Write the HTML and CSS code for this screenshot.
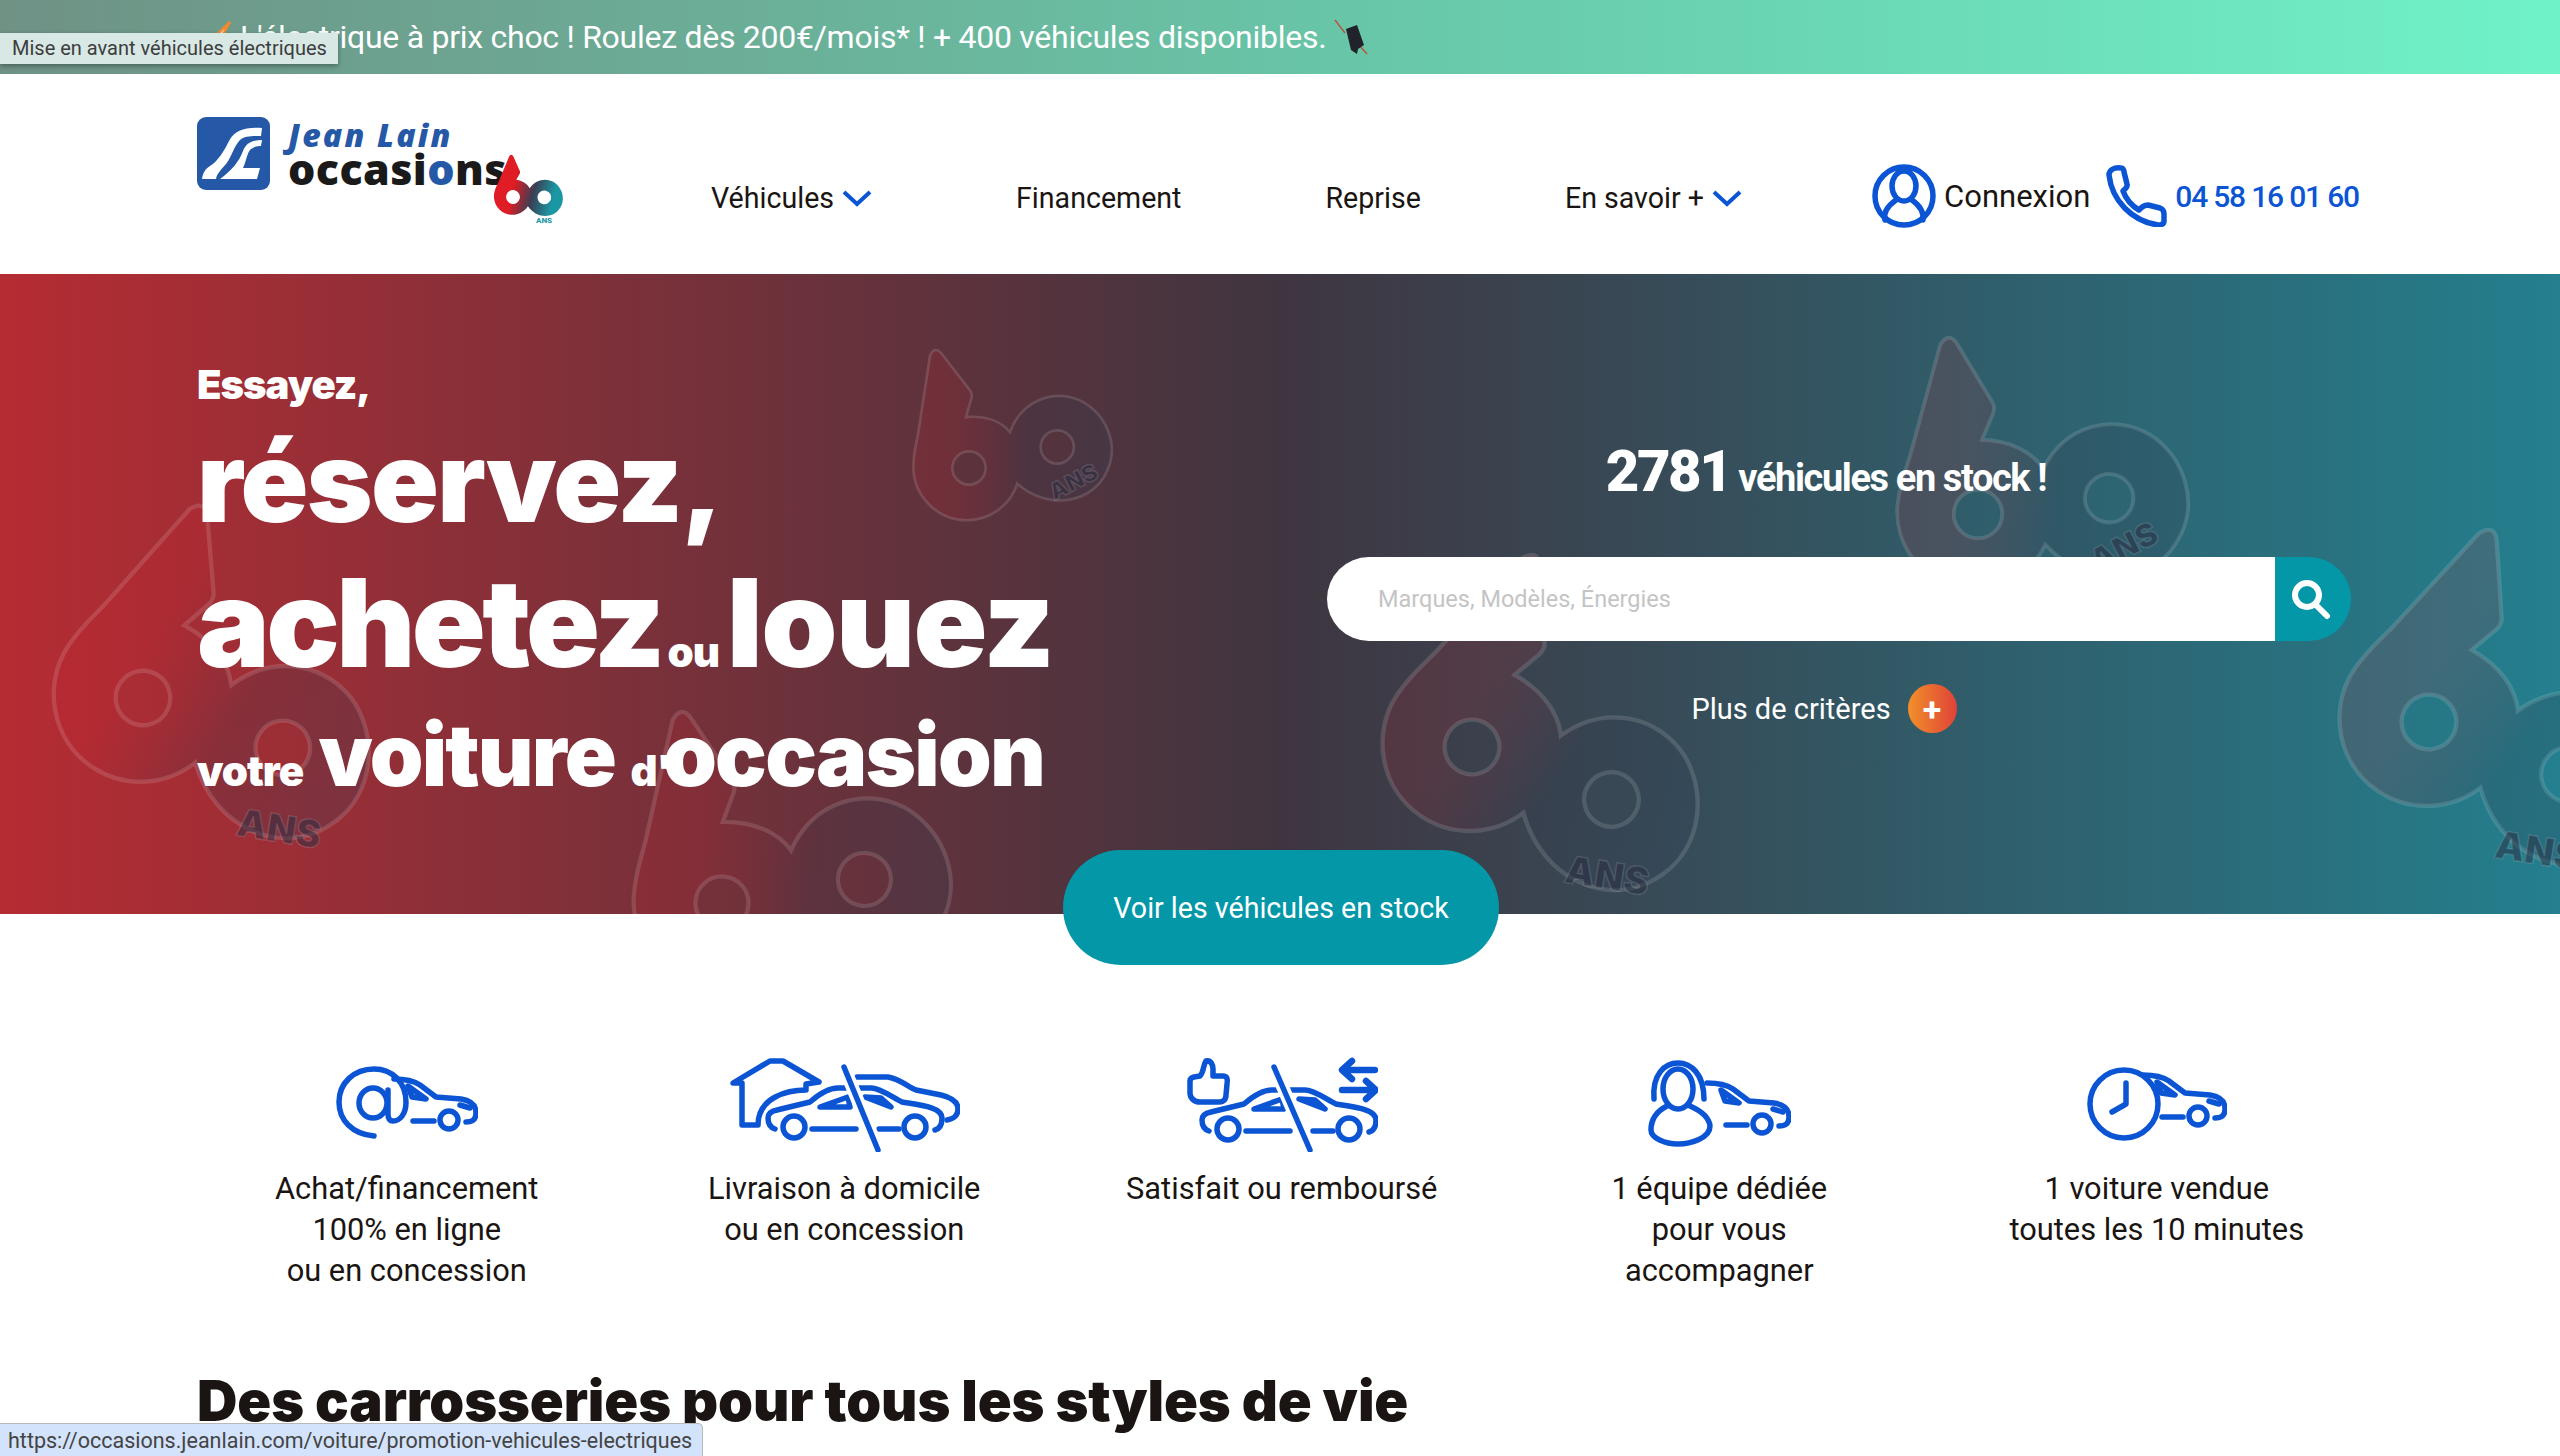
FILE: index.html
```html
<!DOCTYPE html>
<html lang="fr">
<head>
    <meta charset="UTF-8">
    <title>Jean Lain Occasions</title>
    <link rel="stylesheet" href="styles.css">
</head>
<body>
    <!-- shared shapes -->
    <svg class="defs" width="0" height="0">
        <defs>
            <linearGradient id="wm-fill" gradientUnits="userSpaceOnUse" x1="40" y1="0" x2="640" y2="0">
                <stop offset="0.2" stop-color="#d0202c" stop-opacity="0.15"/>
                <stop offset="0.55" stop-color="#2f3448" stop-opacity="0.22"/>
                <stop offset="1" stop-color="#2f3f58" stop-opacity="0.24"/>
            </linearGradient>
            <linearGradient id="logo-fill" gradientUnits="userSpaceOnUse" x1="40" y1="0" x2="640" y2="0">
                <stop offset="0.25" stop-color="#e01c24"/>
                <stop offset="0.55" stop-color="#3a3f55"/>
                <stop offset="0.85" stop-color="#1b97a4"/>
            </linearGradient>
            <path id="sixty" fill-rule="evenodd" d="M90 50Q105 20 125 45L210 155Q218 165 214 180L198 235C260 230 305 250 330 280C365 185 460 150 540 185C620 225 660 320 620 400C580 490 450 520 352 435C330 500 270 545 200 545C110 545 40 470 40 385C40 340 50 310 55 280ZM157 388a50 50 0 1 0 100 0a50 50 0 1 0 -100 0ZM422 325a50 50 0 1 0 100 0a50 50 0 1 0 -100 0Z"/>
            <g id="car-rear">
                <path d="M56 9C68 9 76 11 82 15L98 27L123 29C135 31 138 37 138 43C138 50 134 52 128 52"/>
                <path d="M75 51H96M122 35L132 38"/>
                <circle cx="111" cy="50" r="9"/>
                <path class="solid" d="M70 16L88 29L74 27Z"/>
            </g>
            <g id="car-full">
                <path d="M23 74C17 72 16 67 16 63C16 58 20 56 25 55L58 47C66 40 76 33 86 33L119 33C128 33 140 42 150 47C168 50 190 52 190 63C190 70 187 74 183 75"/>
                <path d="M60 74H104M127 74H147"/>
                <circle cx="42" cy="72" r="11"/>
                <circle cx="163" cy="72" r="11"/>
                <path class="solid" d="M68 52L96 42L98 52ZM113 42L129 43L139 52Z"/>
            </g>
        </defs>
    </svg>

    <div class="promo">
        <svg class="promo-bolt" viewBox="0 0 30 30">
            <path d="M27 2L8 20L15 20L2 29L22 25L15 23Z"/>
        </svg>
        <span>L'électrique à prix choc ! Roulez dès 200€/mois* ! + 400 véhicules disponibles.</span>
        <svg class="promo-plug" viewBox="0 0 36 36">
            <path class="plug-wire" d="M2 1L12 14M26 26L34 35"/>
            <path class="plug-body" d="M13 10L24 6L31 26L25 30L24 35L18 31Z"/>
        </svg>
    </div>
    <div class="tooltip">Mise en avant véhicules électriques</div>

    <header class="site-header">
        <a class="logo">
            <svg class="logo-mark" viewBox="0 0 73 73">
                <rect width="73" height="73" rx="9"/>
                <path d="M65 11C48 10 38 13 32 24C27 34 21 44 13 49C8 52 6 56 5 62L19 62C20 56 25 52 29 47C35 39 37 29 43 23C47 19 56 19 64 19ZM65 23C55 23 49 26 46 34C42 45 34 54 23 62L60 62L63 51L46 51C50 43 50 33 56 31C59 29 62 29 64 29Z"/>
            </svg>
            <span class="logo-text">
                <span class="logo-jean">Jean Lain</span>
                <span class="logo-occ">occasi<b>o</b>ns</span>
            </span>
            <svg class="logo-sixty" viewBox="0 0 80 80">
                <g transform="translate(23 44) rotate(14) scale(.115) translate(-207 -388)">
                    <use href="#sixty" fill="url(#logo-fill)"/>
                    <circle cx="207" cy="388" r="60" fill="#fff"/>
                    <circle cx="472" cy="325" r="60" fill="#fff"/>
                </g>
                <text class="logo-ans" x="46" y="70">ANS</text>
            </svg>
        </a>
        <nav class="main-nav">
            <a class="nav-item">Véhicules <svg class="chev" viewBox="0 0 30 18"><path d="M2 3L15 15L28 3"/></svg></a>
            <a class="nav-item">Financement</a>
            <a class="nav-item">Reprise</a>
            <a class="nav-item">En savoir + <svg class="chev" viewBox="0 0 30 18"><path d="M2 3L15 15L28 3"/></svg></a>
        </nav>
        <div class="header-right">
            <a class="login">
                <svg class="line-icon login-icon" viewBox="0 0 64 64">
                    <circle cx="32" cy="32" r="29"/>
                    <ellipse cx="32" cy="22" rx="12" ry="15"/>
                    <path d="M13 56C11 48 17 41 24 36M40 36C47 41 52 48 51 56"/>
                </svg>
                Connexion
            </a>
            <a class="phone">
                <svg class="line-icon phone-icon" viewBox="0 0 62 62">
                    <path d="M3 10C3 5 8 2 15 3C17 3 18 5 18 7L21 19C22 22 19 24 17 26C20 34 26 41 33 45C36 42 38 40 42 40L54 43C57 44 58 46 58 49L58 56C58 59 55 60 52 60C26 56 6 36 3 10Z"/>
                </svg>
                04 58 16 01 60
            </a>
        </div>
    </header>

    <section class="hero">
        <svg class="hero-marks" viewBox="0 0 2560 640">
            <g class="wm">
                <use href="#sixty" transform="translate(143 424) rotate(33) scale(.545) translate(-207 -388)"/>
                <use href="#sixty" transform="translate(969 194) scale(.333) translate(-207 -388)"/>
                <use href="#sixty" transform="translate(722 629) rotate(4) scale(.53) translate(-207 -388)"/>
                <use href="#sixty" transform="translate(1978 240) rotate(6.5) scale(.485) translate(-207 -388)"/>
                <use href="#sixty" transform="translate(1472 473) rotate(34) scale(.547) translate(-207 -388)"/>
                <use href="#sixty" transform="translate(2429 448) rotate(34) scale(.547) translate(-207 -388)"/>
            </g>
            <g class="wm-ans">
                <text transform="translate(1077 215) rotate(-27)">ANS</text>
                <text class="mid" transform="translate(2129 283) rotate(-27)">ANS</text>
                <text class="big" transform="translate(277 568) rotate(9)">ANS</text>
                <text class="big" transform="translate(1605 615) rotate(9)">ANS</text>
                <text class="big" transform="translate(2535 590) rotate(9)">ANS</text>
            </g>
        </svg>
        <div class="hero-title">
            <div class="t-small">Essayez,</div>
            <div class="t-big">réservez,</div>
            <div class="t-big t-row2">achetez <small>ou</small> <span class="louez">louez</span></div>
            <div class="t-mid"><small>votre</small> voiture <small class="d">d'</small>occasion</div>
        </div>
        <div class="hero-search">
            <div class="stock"><strong>2781</strong> véhicules en stock !</div>
            <form class="search-bar">
                <input class="search-input" type="text" placeholder="Marques, Modèles, Énergies">
                <button class="search-btn" type="button">
                    <svg viewBox="0 0 44 44"><circle cx="19" cy="18" r="12"/><path d="M27 27L39 39"/></svg>
                </button>
            </form>
            <a class="more">Plus de critères <span class="more-plus">+</span></a>
        </div>
    </section>

    <div class="cta-wrap"><a class="cta">Voir les véhicules en stock</a></div>

    <section class="features">
        <div class="feature">
            <div class="feature-icon">
                <svg class="line-icon" width="142" height="76" viewBox="0 0 142 76">
                    <path d="M38 70C16 68 3 54 3 36C3 17 18 3 38 3C56 3 70 16 70 36C70 48 64 55 57 55C53 55 52 52 52 48L52 24"/>
                    <ellipse cx="37" cy="37" rx="14" ry="15"/>
                    <use href="#car-rear" transform="translate(2 4)"/>
                </svg>
            </div>
            <p>Achat/financement<br>100% en ligne<br>ou en concession</p>
        </div>
        <div class="feature">
            <div class="feature-icon">
                <svg class="line-icon" width="232" height="95" viewBox="0 0 232 95">
                    <path d="M14 26H5L42 4H55L91 25L78 27V33C60 33 30 40 30 68H14Z"/>
                    <path d="M129 20H160C172 22 180 30 188 33L213 38C225 41 230 46 230 52C230 58 226 62 219 63"/>
                    <use href="#car-full" transform="translate(24 -2)"/>
                    <path class="halo" d="M116 10L150 93"/>
                    <path d="M116 10L150 93"/>
                </svg>
            </div>
            <p>Livraison à domicile<br>ou en concession</p>
        </div>
        <div class="feature">
            <div class="feature-icon">
                <svg class="line-icon" width="192" height="95" viewBox="0 0 192 95">
                    <path d="M20 4C25 3 27 8 27 12L27 19L37 19C41 19 42 22 41 27L40 38C40 43 37 45 33 45L14 45C8 45 4 41 4 36L4 24Q4 21 8 20L14 19C18 15 17 8 20 4Z"/>
                    <path class="thick" d="M189 13H158M166 4L156 13L166 22M156 33H189M180 24L190 33L180 42"/>
                    <use href="#car-full"/>
                    <path class="halo" d="M88 10L124 93"/>
                    <path d="M88 10L124 93"/>
                </svg>
            </div>
            <p>Satisfait ou remboursé</p>
        </div>
        <div class="feature">
            <div class="feature-icon">
                <svg class="line-icon" width="144" height="88" viewBox="0 0 144 88">
                    <ellipse cx="31" cy="29" rx="15" ry="20"/>
                    <path d="M7 39C5 14 18 3 31 3C44 3 57 14 57 39"/>
                    <path d="M20 46C8 52 4 60 4 70C4 78 18 84 31 84C44 84 63 78 63 66C62 56 52 50 43 46"/>
                    <use href="#car-rear" transform="translate(4 14)"/>
                </svg>
            </div>
            <p>1 équipe dédiée<br>pour vous<br>accompagner</p>
        </div>
        <div class="feature">
            <div class="feature-icon">
                <svg class="line-icon" width="140" height="76" viewBox="0 0 140 76">
                    <use href="#car-rear"/>
                    <circle class="clock" cx="37" cy="38" r="34"/>
                    <path d="M39 17V38L25 46"/>
                </svg>
            </div>
            <p>1 voiture vendue<br>toutes les 10 minutes</p>
        </div>
    </section>

    <h2 class="styles-title">Des carrosseries pour tous les styles de vie</h2>

    <div class="status-bubble">https://occasions.jeanlain.com/voiture/promotion-vehicules-electriques</div>
</body>
</html>
```

FILE: styles.css
```css
html, body {
    margin: 0;
    height: 1456px;
    overflow: hidden;
}

body {
    position: relative;
    font-family: Roboto, sans-serif;
    color: #1a1512;
    background: #fff;
}

.defs {
    position: absolute;
}

/* Promo strip */
.promo {
    height: 74px;
    display: flex;
    align-items: center;
    padding-left: 203px;
    color: #fff;
    font-size: 32px;
    background: linear-gradient(90deg, #6f9285 0%, #68c8a9 55%, #70f2c8 100%);
}

.promo span {
    margin-left: 7px;
    letter-spacing: -0.27px;
}

.promo-bolt {
    width: 30px;
    height: 30px;
    margin-top: -4px;
}

.promo-bolt path {
    fill: #f7e6d8;
    stroke: #f08a2c;
    stroke-width: 2.5;
}

.promo-plug {
    width: 36px;
    height: 36px;
    margin-left: 7px;
}

.plug-wire {
    fill: none;
    stroke: #b5573f;
    stroke-width: 1.5;
}

.plug-body {
    fill: #20242a;
}

.tooltip {
    position: absolute;
    left: 0;
    top: 33px;
    width: 338px;
    height: 31px;
    box-sizing: border-box;
    padding-left: 12px;
    font-size: 20px;
    line-height: 31px;
    color: #3d3d3d;
    background: #d7e8e5;
    box-shadow: 0 2px 5px rgba(0, 0, 0, 0.35);
    white-space: nowrap;
}

/* Header */
.site-header {
    height: 200px;
    display: flex;
    position: relative;
    padding-left: 197px;
    box-sizing: border-box;
}

.logo {
    width: 514px;
    height: 200px;
    flex: none;
    display: flex;
    align-items: flex-start;
    position: relative;
}

.logo-mark {
    width: 73px;
    height: 73px;
    margin-top: 43px;
}

.logo-mark rect {
    fill: #2558a6;
}

.logo-mark path {
    fill: #fff;
}

.logo-text {
    display: flex;
    flex-direction: column;
    margin: 44px 0 0 18px;
}

.logo-jean {
    font-family: "Open Sans", sans-serif;
    font-style: italic;
    font-weight: 800;
    font-size: 32px;
    line-height: 33px;
    letter-spacing: 2.2px;
    color: #2558a6;
}

.logo-occ {
    font-family: "Open Sans", sans-serif;
    font-weight: 800;
    font-size: 43px;
    line-height: 36px;
    letter-spacing: 0.4px;
    color: #1a1a1a;
}

.logo-occ b {
    color: #2558a6;
}

.logo-sixty {
    position: absolute;
    left: 293px;
    top: 79px;
    width: 80px;
    height: 80px;
}

.logo-ans {
    font-family: Roboto, sans-serif;
    font-weight: 900;
    font-size: 8px;
    fill: #2a9aa8;
}

.main-nav {
    display: flex;
    gap: 144px;
    align-items: center;
    height: 100%;
    padding-top: 48px;
    box-sizing: border-box;
}

.nav-item {
    display: flex;
    align-items: center;
    gap: 8px;
    font-size: 28.6px;
    white-space: nowrap;
}

.chev {
    width: 30px;
    height: 18px;
    fill: none;
    stroke: #0b55d4;
    stroke-width: 4;
}

.header-right {
    display: flex;
    align-items: center;
    margin-left: 130px;
    padding-top: 44px;
    height: 100%;
    box-sizing: border-box;
}

.login {
    display: flex;
    align-items: center;
    gap: 8px;
    font-size: 31px;
}

.phone {
    display: flex;
    align-items: center;
    gap: 7px;
    margin-left: 16px;
    font-size: 30px;
    font-weight: 500;
    letter-spacing: -1.2px;
    color: #0b55d4;
    white-space: nowrap;
}

.line-icon {
    fill: none;
    stroke: #0b55d4;
    stroke-width: 5.5;
    stroke-linecap: round;
    stroke-linejoin: round;
}

.line-icon .solid {
    fill: #0b55d4;
    stroke: none;
}

.line-icon .halo {
    stroke: #fff;
    stroke-width: 13;
}

.line-icon .thick {
    stroke-width: 6.5;
}

.line-icon .clock {
    fill: #fff;
}

.login-icon {
    width: 64px;
    height: 64px;
}

.phone-icon {
    width: 62px;
    height: 62px;
}

/* Hero */
.hero {
    height: 640px;
    display: flex;
    position: relative;
    overflow: hidden;
    color: #fff;
    background: linear-gradient(90deg, #b62c33 0%, #3f3540 50%, #247f8e 100%);
}

.hero-marks {
    position: absolute;
    left: 0;
    top: 0;
    width: 2560px;
    height: 640px;
}

.wm {
    fill: url(#wm-fill);
    stroke: rgba(255, 255, 255, 0.13);
    stroke-width: 8;
}

.wm-ans text {
    font-family: Inter, sans-serif;
    font-weight: 900;
    font-size: 23px;
    text-anchor: middle;
    fill: rgba(40, 45, 65, 0.5);
    stroke: rgba(255, 255, 255, 0.14);
    stroke-width: 1.5;
}

.wm-ans .mid {
    font-size: 32px;
}

.wm-ans .big {
    font-size: 38px;
}

.hero-title {
    position: relative;
    width: 1130px;
    flex: none;
    padding: 85px 0 0 197px;
    font-family: Inter, sans-serif;
    font-weight: 900;
    white-space: nowrap;
}

.t-small {
    font-size: 40px;
    line-height: 52px;
    letter-spacing: -1px;
}

.t-big {
    font-size: 112px;
    line-height: 140px;
    letter-spacing: -1.6px;
}

.t-row2 {
    font-size: 122px;
    line-height: 144px;
    letter-spacing: -3.6px;
}

.t-big small {
    font-size: 42px;
    letter-spacing: -1px;
    margin: 0 -13px 0 -15px;
}

.t-big .louez {
    letter-spacing: -1.6px;
}

.t-mid {
    font-size: 86px;
    line-height: 110px;
    letter-spacing: -1.8px;
    margin-top: -24px;
}

.t-mid small {
    font-size: 42px;
    letter-spacing: -1px;
}

.t-mid .d {
    margin-right: -8px;
}

.hero-search {
    position: relative;
    width: 1024px;
    display: flex;
    flex-direction: column;
    align-items: center;
    padding-top: 165px;
}

.stock {
    font-size: 38px;
    font-weight: 700;
    line-height: 64px;
    letter-spacing: -1.4px;
    white-space: nowrap;
    margin-left: -26px;
}

.stock strong {
    font-size: 58px;
    letter-spacing: -2.5px;
}

.search-bar {
    display: flex;
    width: 100%;
    height: 84px;
    margin: 47px 0 0;
}

.search-input {
    flex: 1;
    min-width: 0;
    border: none;
    outline: none;
    padding: 0 0 0 51px;
    font-family: Roboto, sans-serif;
    font-size: 23.5px;
    background: #fff;
    border-radius: 42px 0 0 42px;
}

.search-input::placeholder {
    color: #c4c4c4;
}

.search-btn {
    width: 76px;
    border: none;
    padding: 0;
    background: #0397a8;
    border-radius: 0 42px 42px 0;
}

.search-btn svg {
    width: 44px;
    height: 44px;
    display: block;
    margin: 0 0 0 13px;
    fill: none;
    stroke: #fff;
    stroke-width: 6;
    stroke-linecap: round;
}

.more {
    display: flex;
    align-items: center;
    gap: 17px;
    margin: 43px 0 0 -30px;
    font-size: 29px;
}

.more-plus {
    width: 49px;
    height: 49px;
    border-radius: 50%;
    display: flex;
    align-items: center;
    justify-content: center;
    font-weight: 700;
    font-size: 34px;
    background: linear-gradient(90deg, #f2902a, #df4238);
}

/* Call to action */
.cta-wrap {
    display: flex;
    justify-content: center;
    position: relative;
    margin-top: -64px;
    padding-left: 2px;
}

.cta {
    width: 436px;
    height: 115px;
    display: flex;
    align-items: center;
    justify-content: center;
    border-radius: 58px;
    font-size: 28.6px;
    color: #fff;
    background: #0397a8;
}

/* Features */
.features {
    display: grid;
    grid-template-columns: repeat(5, 437.5px);
    padding-left: 188px;
    margin-top: 91px;
}

.feature {
    display: flex;
    flex-direction: column;
    align-items: center;
}

.feature-icon {
    height: 96px;
    display: flex;
    align-items: center;
}

.feature p {
    margin: 16px 0 0;
    font-size: 30.8px;
    line-height: 41px;
    text-align: center;
}

.styles-title {
    position: absolute;
    left: 197px;
    top: 1366px;
    margin: 0;
    font-family: Inter, sans-serif;
    font-weight: 900;
    font-size: 56px;
    line-height: 70px;
    letter-spacing: -0.1px;
    white-space: nowrap;
}

.status-bubble {
    position: absolute;
    left: 0;
    bottom: 0;
    width: 703px;
    height: 33px;
    box-sizing: border-box;
    padding-left: 8px;
    font-family: Roboto, sans-serif;
    font-size: 21.5px;
    line-height: 33px;
    color: #444;
    background: #d2e3fb;
    border: 1px solid #b9b9b9;
    border-width: 1px 1px 0 0;
    border-radius: 0 5px 0 0;
    white-space: nowrap;
}
```
